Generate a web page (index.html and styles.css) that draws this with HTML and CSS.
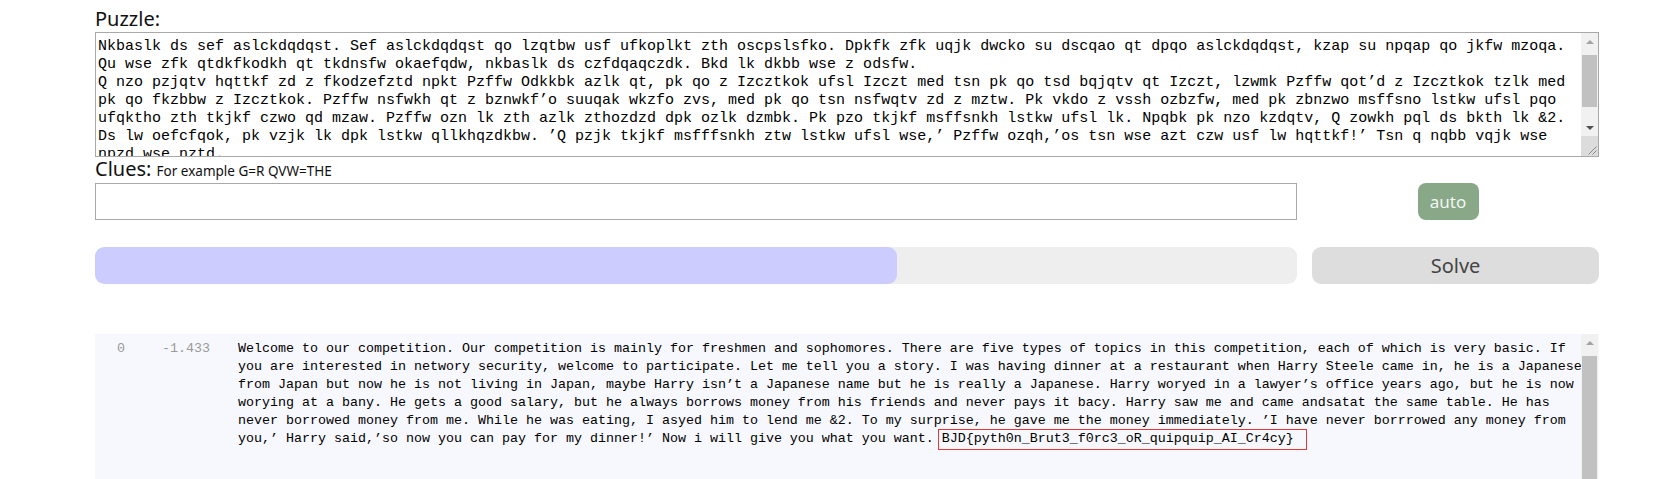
FILE: index.html
```html
<!DOCTYPE html>
<html lang="en">
<head>
<meta charset="utf-8">
<title>Puzzle solver</title>
<link rel="stylesheet" href="styles.css">
</head>
<body>
<main class="page">
  <label class="label" for="puzzle">Puzzle:</label>
  <div class="puzzle-box">
    <textarea id="puzzle" class="puzzle" spellcheck="false">Nkbaslk ds sef aslckdqdqst. Sef aslckdqdqst qo lzqtbw usf ufkoplkt zth oscpslsfko. Dpkfk zfk uqjk dwcko su dscqao qt dpqo aslckdqdqst, kzap su npqap qo jkfw mzoqa.
Qu wse zfk qtdkfkodkh qt tkdnsfw okaefqdw, nkbaslk ds czfdqaqczdk. Bkd lk dkbb wse z odsfw.
Q nzo pzjqtv hqttkf zd z fkodzefztd npkt Pzffw Odkkbk azlk qt, pk qo z Izcztkok ufsl Izczt med tsn pk qo tsd bqjqtv qt Izczt, lzwmk Pzffw qot’d z Izcztkok tzlk med
pk qo fkzbbw z Izcztkok. Pzffw nsfwkh qt z bznwkf’o suuqak wkzfo zvs, med pk qo tsn nsfwqtv zd z mztw. Pk vkdo z vssh ozbzfw, med pk zbnzwo msffsno lstkw ufsl pqo
ufqktho zth tkjkf czwo qd mzaw. Pzffw ozn lk zth azlk zthozdzd dpk ozlk dzmbk. Pk pzo tkjkf msffsnkh lstkw ufsl lk. Npqbk pk nzo kzdqtv, Q zowkh pql ds bkth lk &amp;2.
Ds lw oefcfqok, pk vzjk lk dpk lstkw qllkhqzdkbw. ’Q pzjk tkjkf msfffsnkh ztw lstkw ufsl wse,’ Pzffw ozqh,’os tsn wse azt czw usf lw hqttkf!’ Tsn q nqbb vqjk wse
npzd wse nztd.</textarea>
    <div class="scrollbar scrollbar-puzzle" aria-hidden="true">
      <span class="sb-btn sb-up"></span>
      <span class="sb-thumb sb-thumb-puzzle"></span>
      <span class="sb-space"></span>
      <span class="sb-btn sb-down"></span>
    </div>
    <span class="grip" aria-hidden="true">
      <svg width="17" height="20" viewBox="0 0 17 20">
        <line x1="15.5" y1="10.5" x2="7.5" y2="18.5" stroke="#8a8a8a" stroke-width="1"/>
        <line x1="15.5" y1="14.5" x2="11.5" y2="18.5" stroke="#8a8a8a" stroke-width="1"/>
      </svg>
    </span>
  </div>

  <div class="label clues-label">Clues: <span class="hint">For example G=R QVW=THE</span></div>

  <div class="row">
    <input class="clues" type="text" aria-label="Clues">
    <div class="side side-center"><button class="auto" type="button">auto</button></div>
  </div>

  <div class="row row-solve">
    <div class="progress"><div class="progress-fill" style="width:66.7%"></div></div>
    <div class="side side-solve"><button class="solve" type="button">Solve</button></div>
  </div>

  <section class="results">
    <div class="result">
      <span class="idx">0</span>
      <span class="score">-1.433</span>
      <div class="plain">
        <div class="pline">Welcome to our competition. Our competition is mainly for freshmen and sophomores. There are five types of topics in this competition, each of which is very basic. If</div>
        <div class="pline">you are interested in networy security, welcome to participate. Let me tell you a story. I was having dinner at a restaurant when Harry Steele came in, he is a Japanese</div>
        <div class="pline">from Japan but now he is not living in Japan, maybe Harry isn’t a Japanese name but he is really a Japanese. Harry woryed in a lawyer’s office years ago, but he is now</div>
        <div class="pline">worying at a bany. He gets a good salary, but he always borrows money from his friends and never pays it bacy. Harry saw me and came andsatat the same table. He has</div>
        <div class="pline">never borrowed money from me. While he was eating, I asyed him to lend me &amp;2. To my surprise, he gave me the money immediately. ’I have never borrrowed any money from</div>
        <div class="pline">you,’ Harry said,’so now you can pay for my dinner!’ Now i will give you what you want. <span class="flag">BJD{pyth0n_Brut3_f0rc3_oR_quipquip_AI_Cr4cy}</span></div>
      </div>
    </div>
    <div class="scrollbar scrollbar-results" aria-hidden="true">
      <span class="sb-btn sb-up"></span>
      <span class="sb-thumb sb-thumb-results"></span>
    </div>
  </section>
</main>
</body>
</html>
```

FILE: styles.css
```css
html, body {
  margin: 0;
  padding: 0;
  background: #ffffff;
  overflow: hidden;
}

.page {
  width: 1504px;
  margin-left: 95px;
  padding-top: 5px;
  font-family: "Noto Sans", "Open Sans", sans-serif;
  color: #111;
}

.label {
  display: block;
  font-size: 20px;
  line-height: 27px;
  color: #111;
}

.clues-label {
  line-height: 23px;
}

.hint {
  font-size: 13.5px;
  color: #111;
}

.puzzle-box {
  position: relative;
  height: 125px;
}

.puzzle {
  display: block;
  box-sizing: border-box;
  width: 100%;
  height: 125px;
  margin: 0;
  padding: 5px 20px 0 2px;
  border: 1px solid #a9a9a9;
  border-radius: 0;
  font-family: "Liberation Mono", "DejaVu Sans Mono", monospace;
  font-size: 15px;
  line-height: 18px;
  color: #000;
  background: #fff;
  resize: none;
  overflow: hidden;
  white-space: pre-wrap;
  outline: none;
}

/* fake classic scrollbars */
.scrollbar {
  position: absolute;
  width: 17px;
  background: #f1f1f1;
  display: flex;
  flex-direction: column;
}

.scrollbar-puzzle {
  top: 1px;
  right: 1px;
  bottom: 21px;
}

.scrollbar-results {
  top: 0;
  right: 1px;
  bottom: 0;
}

.sb-btn {
  flex: 0 0 17px;
  height: 17px;
  display: flex;
  align-items: center;
  justify-content: center;
}

.sb-btn::before {
  content: "";
  width: 0;
  height: 0;
  border-left: 4px solid transparent;
  border-right: 4px solid transparent;
}

.sb-up::before {
  border-bottom: 4px solid #a3a3a3;
}

.sb-down::before {
  border-top: 4px solid #505050;
}

.sb-thumb {
  margin: 0 1px;
  background: #c1c1c1;
}

.sb-thumb-puzzle {
  margin-top: 5px;
  flex: 0 0 52px;
}

.sb-thumb-results {
  margin-top: 5px;
  flex: 1 1 auto;
}

.sb-space {
  flex: 1 1 auto;
}

.grip {
  position: absolute;
  right: 1px;
  bottom: 1px;
  width: 17px;
  height: 20px;
  background: #dcdcdc;
}

.grip svg {
  display: block;
}

.row {
  display: grid;
  grid-template-columns: 1202px 1fr;
  height: 37px;
}

.row-solve {
  margin-top: 27px;
}

.clues {
  box-sizing: border-box;
  width: 100%;
  height: 37px;
  margin: 0;
  padding: 2px 6px;
  border: 1px solid #a9a9a9;
  border-radius: 0;
  font-family: "Noto Sans", sans-serif;
  font-size: 16px;
  background: #fff;
  outline: none;
}

.side-center {
  display: flex;
  justify-content: center;
}

.side-solve {
  padding-left: 15px;
}

.auto {
  width: 61px;
  height: 37px;
  border: 0;
  border-radius: 8px;
  background: #88a887;
  color: #f2f6f2;
  font-family: "Noto Sans", sans-serif;
  font-size: 17px;
  padding: 0;
}

.progress {
  height: 37px;
  border-radius: 9px;
  background: #eeeeee;
  overflow: hidden;
}

.progress-fill {
  height: 100%;
  border-radius: 9px;
  background: #ccccff;
}

.solve {
  width: 100%;
  height: 37px;
  border: 0;
  border-radius: 9px;
  background: #dddddd;
  color: #444;
  font-family: "Noto Sans", sans-serif;
  font-size: 20px;
  padding: 0;
}

.results {
  position: relative;
  margin-top: 50px;
  height: 145px;
  background: #f7f8fd;
  overflow: hidden;
}

.result {
  display: flex;
  padding: 6px 0 0 22px;
  font-family: "Liberation Mono", "DejaVu Sans Mono", monospace;
  font-size: 13.333px;
  line-height: 18px;
}

.idx {
  flex: 0 0 45px;
  color: #9a9a9a;
}

.score {
  flex: 0 0 76px;
  color: #9a9a9a;
}

.plain {
  flex: 1 1 auto;
  min-width: 0;
  color: #000;
}

.pline {
  white-space: pre;
}

.flag {
  border: 1px solid #e53935;
  padding: 1px 12px 3px 3px;
  margin: 0 -13px 0 -4px;
}
```
